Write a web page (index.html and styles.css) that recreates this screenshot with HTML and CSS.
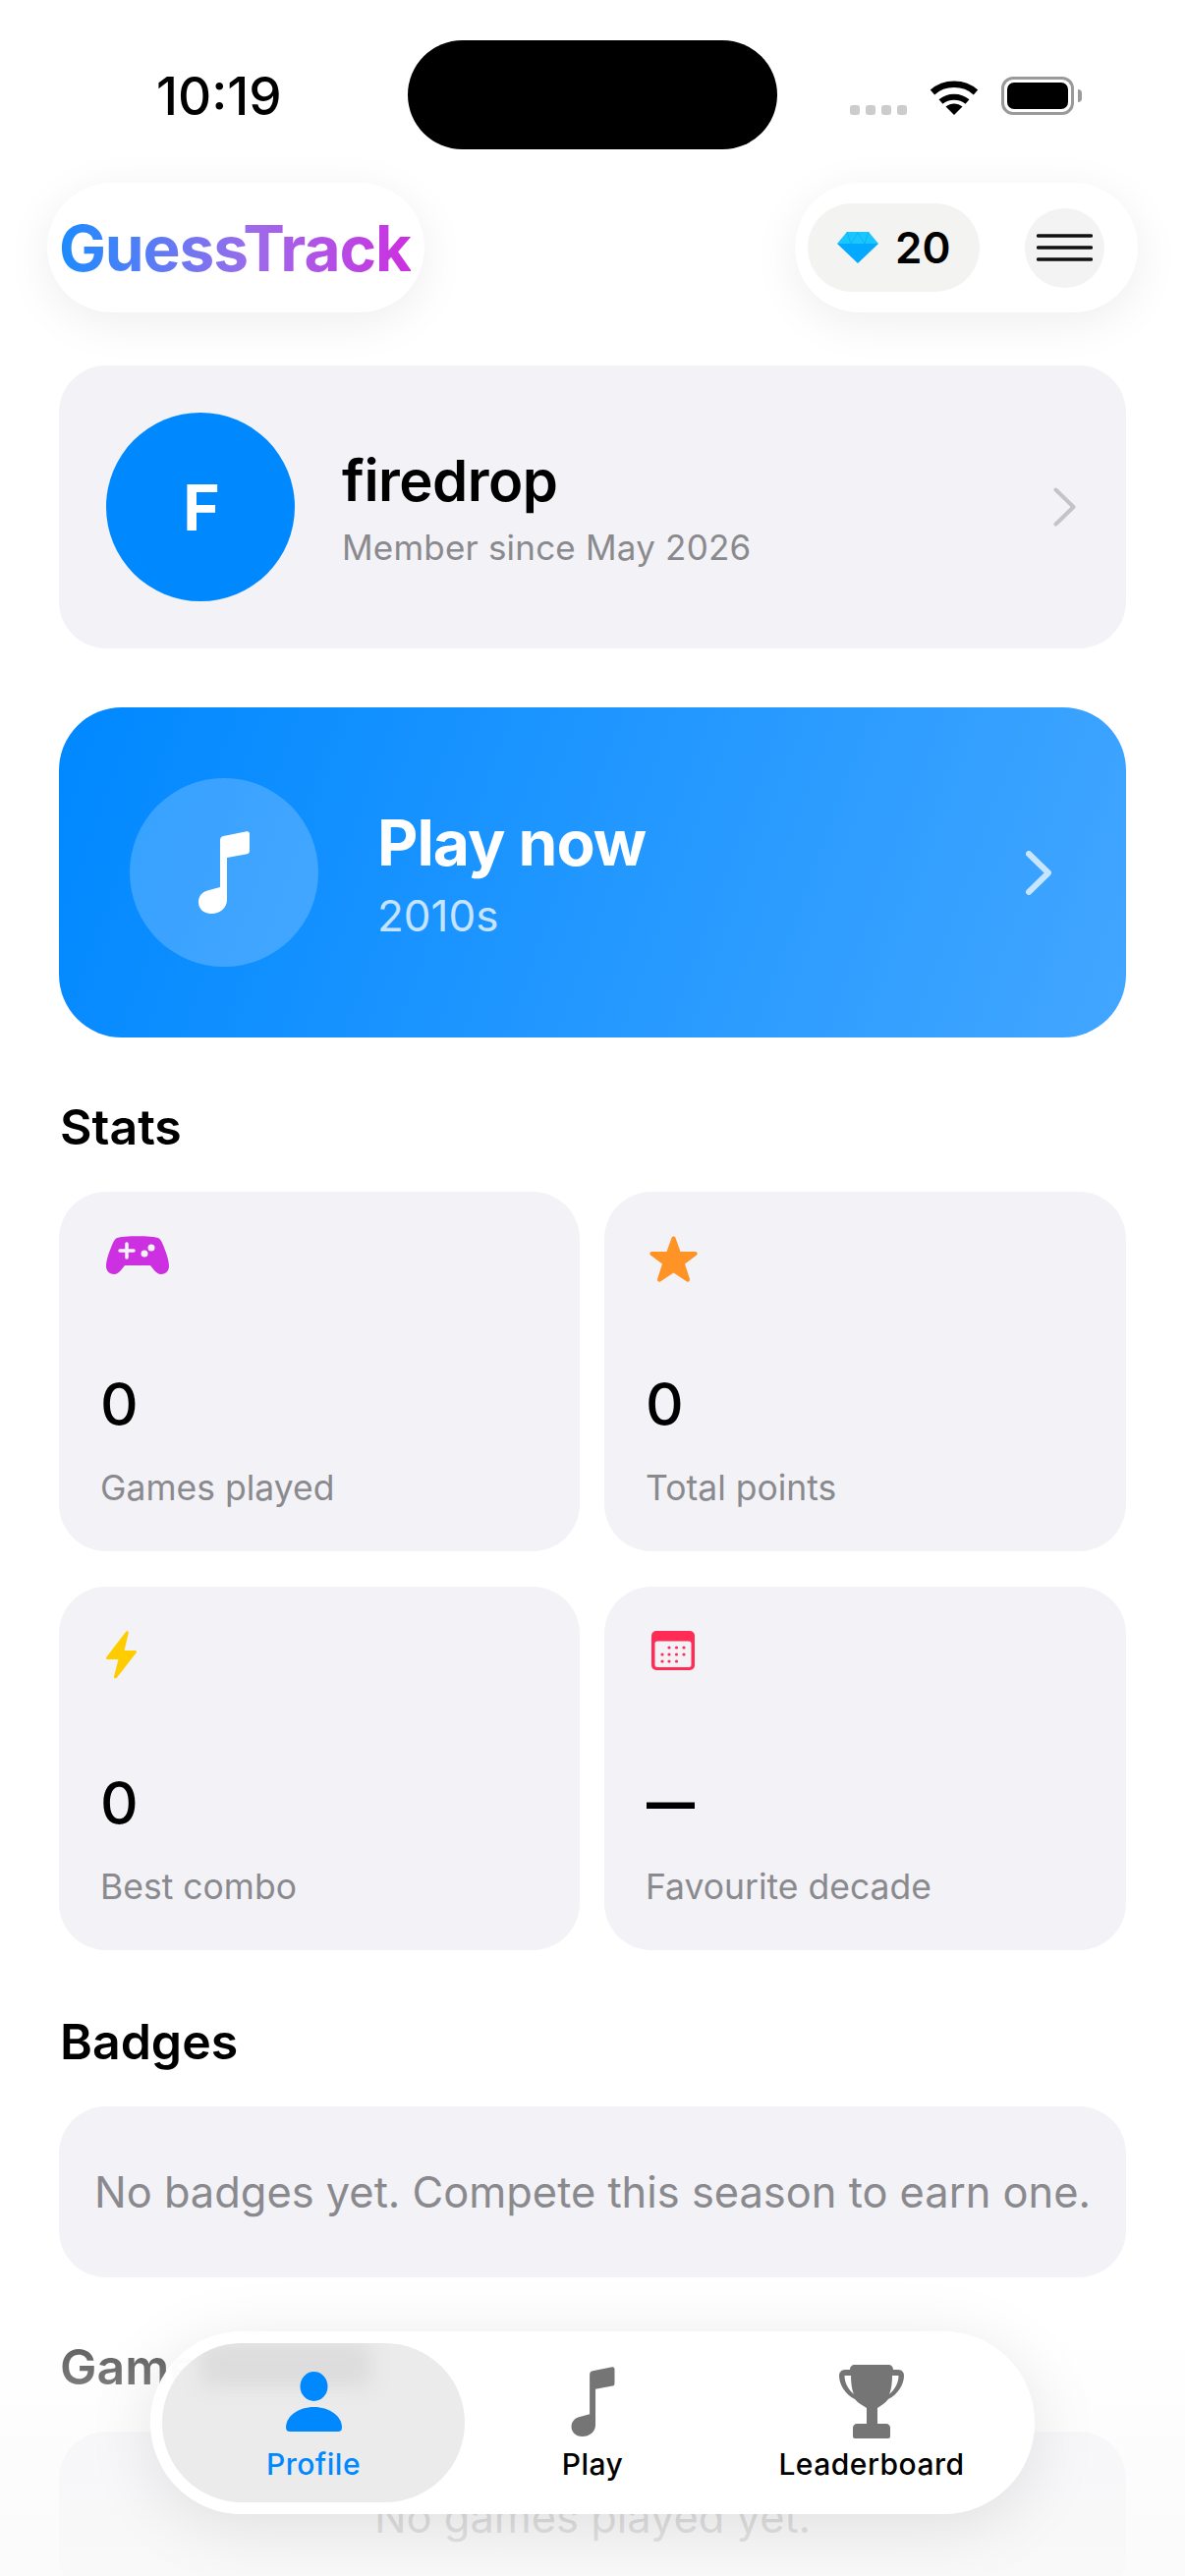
FILE: index.html
```html
<!DOCTYPE html>
<html lang="en">
<head>
<meta charset="utf-8">
<title>GuessTrack</title>
<link rel="stylesheet" href="styles.css">
</head>
<body>
<div class="screen">

	<!-- status bar -->
	<div class="status">
		<div class="time">10:19</div>
		<div class="island"></div>
		<div class="status-icons">
			<div class="signal"><i></i><i></i><i></i><i></i></div>
			<svg class="wifi" width="50" height="37" viewBox="0 0 50 37">
				<path d="M3 14C15 3 35 3 47 14" fill="none" stroke="#000" stroke-width="6.5"/>
				<path d="M11.500 23.500C19 17 31 17 38.500 23.500" fill="none" stroke="#000" stroke-width="6"/>
				<path d="M25 37L16.500 28.500C22 24.500 28 24.500 33.500 28.500Z"/>
			</svg>
			<div class="battery"><div class="battery-fill"></div></div>
		</div>
	</div>

	<!-- header -->
	<div class="header">
		<div class="pill logo-pill"><span class="logo">GuessTrack</span></div>
		<div class="pill tools">
			<div class="gems">
				<svg width="42" height="32" viewBox="0 0 42 32">
					<path d="M10 0H32L42 12H0Z" fill="#19c6ff"/>
					<path d="M0 12H42L21 32Z" fill="#02a9ff"/>
					<path d="M10 0L14 12L21 1L28 12L32 0" fill="none" stroke="#0aa6e8" stroke-width=".6"/>
				</svg>
				<span>20</span>
			</div>
			<div class="menu">
				<svg width="57" height="28" viewBox="0 0 57 28">
					<path d="M1.500 2H55.500M1.500 14H55.500M1.500 26H55.500" stroke="#111" stroke-width="3.500" stroke-linecap="round"/>
				</svg>
			</div>
		</div>
	</div>

	<div class="content">

		<div class="card profile">
			<div class="avatar">F</div>
			<div class="profile-text">
				<div class="name">firedrop</div>
				<div class="since">Member since May 2026</div>
			</div>
			<svg class="chevron" width="23" height="40" viewBox="0 0 23 40">
				<path d="M2.500 2.500L20.500 20L2.500 37.500" fill="none" stroke="#c4c4c8" stroke-width="4" stroke-linecap="round" stroke-linejoin="round"/>
			</svg>
		</div>

		<div class="play">
			<div class="play-circle">
				<svg width="52" height="84" viewBox="0 0 52 84">
					<path d="M22 57V10C22 7 23 5.500 25.500 5L49 .2C51 -.1 52 1 52 3V20C52 22 51 22.800 49.500 23.200L29 27V70C29 78 22 84 13 84C5 84 0 79 0 72C0 66 4 62 9 60.500Z" fill="#fff"/>
				</svg>
			</div>
			<div class="play-text">
				<div class="play-title">Play now</div>
				<div class="play-sub">2010s</div>
			</div>
			<svg class="chevron" width="26" height="45" viewBox="0 0 26 45">
				<path d="M3 3L23 22.500L3 42" fill="none" stroke="#fff" stroke-opacity=".72" stroke-width="6" stroke-linecap="round" stroke-linejoin="round"/>
			</svg>
		</div>

		<h2 class="title">Stats</h2>
		<div class="stats">
			<div class="card stat">
				<svg class="stat-icon" width="64" height="40" viewBox="0 0 64 40">
					<path d="M11 3C17 .5 47 .5 53 3C55 4 56 6 57 8C60 15 64 25 64 32C64 37 60 40 56 40C53 40 51 38 49 36L45 31H19L15 36C13 38 11 40 8 40C4 40 0 37 0 32C0 25 4 15 7 8C8 6 9 4 11 3Z" fill="#cc30e0"/>
					<path d="M21 9V23M14 16H28" stroke="#f2f2f7" stroke-width="3.500" stroke-linecap="round"/>
					<circle cx="46" cy="13" r="3.500" fill="#f2f2f7"/>
					<circle cx="39" cy="19" r="3.500" fill="#f2f2f7"/>
				</svg>
				<div class="stat-value">0</div>
				<div class="stat-label">Games played</div>
			</div>
			<div class="card stat">
				<svg class="stat-icon star" width="49" height="48" viewBox="0 0 49 48">
					<path d="M24.500 1.500C25.500 1.500 26 2 26.500 3L31.500 17H46.500C48.500 17 49.500 19 48 20.500L36 29.500L41 45C41.500 47 39.500 48.500 38 47.500L24.500 38.500L11 47.500C9.500 48.500 7.500 47 8 45L13 29.500L1 20.500C-.5 19 .5 17 2.500 17H17.500L22.500 3C23 2 23.500 1.500 24.500 1.500Z" fill="#ff9326"/>
				</svg>
				<div class="stat-value">0</div>
				<div class="stat-label">Total points</div>
			</div>
			<div class="card stat">
				<svg class="stat-icon low" width="31" height="49" viewBox="0 0 31 49">
					<path d="M20 1C21 -.2 23 .3 22.800 2L18.500 20H29.500C31 20 31.500 21.500 30.500 22.500L11 47.500C10 49 7.500 48.500 8 46.500L12.500 29H1.500C0 29 -.5 27.500 .5 26.500Z" fill="#ffcc00"/>
				</svg>
				<div class="stat-value">0</div>
				<div class="stat-label">Best combo</div>
			</div>
			<div class="card stat">
				<svg class="stat-icon low" width="44" height="40" viewBox="0 0 44 40">
					<rect width="44" height="40" rx="5" fill="#ff2d55"/>
					<rect x="3.500" y="10.500" width="37" height="26.500" rx="2.500" fill="#f2f2f7"/>
					<g fill="#ff2d55">
						<circle cx="18" cy="17" r="1.600"/><circle cx="25.500" cy="17" r="1.600"/><circle cx="33" cy="17" r="1.600"/>
						<circle cx="11" cy="24" r="1.600"/><circle cx="18" cy="24" r="1.600"/><circle cx="25.500" cy="24" r="1.600"/><circle cx="33" cy="24" r="1.600"/>
						<circle cx="11" cy="31" r="1.600"/><circle cx="18" cy="31" r="1.600"/><circle cx="25.500" cy="31" r="1.600"/>
					</g>
				</svg>
				<div class="stat-value dash">—</div>
				<div class="stat-label">Favourite decade</div>
			</div>
		</div>

		<h2 class="title badges-title">Badges</h2>
		<div class="card empty">No badges yet. Compete this season to earn one.</div>

		<h2 class="title">Games played</h2>
		<div class="card empty">No games played yet.</div>
	</div>

	<div class="fade"></div>

	<!-- tab bar -->
	<div class="tabs">
		<div class="tab active">
			<div class="tab-icon">
				<svg width="57" height="61" viewBox="0 0 57 61">
					<ellipse cx="28.500" cy="15" rx="14" ry="15"/>
					<path d="M0 57C0 45 13 36 28.500 36C44 36 57 45 57 57C57 60 55 61 53 61H4C2 61 0 60 0 57Z"/>
				</svg>
			</div>
			<div class="tab-label">Profile</div>
		</div>
		<div class="tab">
			<div class="tab-icon">
				<svg width="45" height="71" viewBox="0 0 52 84">
					<path d="M22 57V10C22 7 23 5.500 25.500 5L49 .2C51 -.1 52 1 52 3V20C52 22 51 22.800 49.500 23.200L29 27V70C29 78 22 84 13 84C5 84 0 79 0 72C0 66 4 62 9 60.500Z"/>
				</svg>
			</div>
			<div class="tab-label">Play</div>
		</div>
		<div class="tab">
			<div class="tab-icon">
				<svg width="66" height="75" viewBox="0 0 66 75">
					<path d="M16 0H50C53 0 55 2 55 5H60C64 5 66 8 66 11C66 20 60 30 50 35C47 39 43 41 39 44V60H48C50 60 52 62 52 64V73C52 74 51 75 50 75H16C15 75 14 74 14 73V64C14 62 16 60 18 60H28V44C24 41 19 39 16 35C6 30 0 20 0 11C0 8 2 5 6 5H11C11 2 13 0 16 0Z"/>
					<path d="M5.500 11H12C12 18 13 26 15 30C10 26 5.500 19 5.500 11ZM60.500 11H54C54 18 53 26 51 30C56 26 60.500 19 60.500 11Z" fill="#fff"/>
				</svg>
			</div>
			<div class="tab-label">Leaderboard</div>
		</div>
	</div>
</div>
</body>
</html>
```

FILE: styles.css
```css
*{ margin:0; padding:0; box-sizing:border-box;}
body{ background:#fff; color:#000; font-family:Inter,"Liberation Sans",sans-serif;}
svg{ display:block;}

.screen{ width:1206px; height:2622px; overflow:hidden; position:relative; background:#fff;}

/* status bar */
.status{ height:186px; padding:41px 0 0 159px; display:grid; grid-template-columns:256px 376px 1fr;}
.time{ font-size:53px; font-weight:500; line-height:114px; height:111px;}
.island{ height:111px; background:#000; border-radius:56px;}
.status-icons{ padding:37px 0 0 74px; display:flex; align-items:flex-end; height:76px;}
.signal{ display:flex; gap:6px; width:81px;}
.signal i{ width:10px; height:10px; background:#ccc; border-radius:3px;}
.battery{ width:74px; height:39px; margin-left:23px; border:3px solid #9a9a9a; border-radius:12px; padding:3px; position:relative;}
.battery:after{ content:""; position:absolute; right:-11px; top:10px; width:4px; height:13px; background:#9a9a9a; border-radius:0 4px 4px 0;}
.battery-fill{ height:100%; background:#000; border-radius:7px;}

/* header */
.header{ height:132px; margin:0 48px; display:flex; justify-content:space-between; position:relative; z-index:1;}
.pill{ height:132px; background:#fff; border-radius:66px; box-shadow:0 10px 48px rgba(0,0,0,.07);}
.logo-pill{ width:384px; display:flex; align-items:center; justify-content:center;}
.logo{ font-size:64px; font-weight:700; letter-spacing:-1.100px; margin-right:2px; background:linear-gradient(90deg,#1a8cff,#9d6bea 55%,#cc30e0); -webkit-background-clip:text; background-clip:text; color:transparent;}
.tools{ width:349px; padding:0 34px 0 13px; display:flex; align-items:center; justify-content:space-between;}
.gems{ width:175px; height:90px; background:#f3f4f2; border-radius:45px; padding-left:30px; display:flex; align-items:center; gap:17px; font-size:44px; font-weight:600;}
.menu{ width:81px; height:81px; background:#f3f3f3; border-radius:50%; display:flex; align-items:center; justify-content:center;}

.content{ padding:54px 60px 0;}
.card{ background:#f2f2f7; border-radius:48px;}

/* profile */
.profile{ height:288px; padding:0 51px 0 48px; display:flex; align-items:center; gap:48px;}
.avatar{ width:192px; height:192px; border-radius:50%; background:#0088ff; color:#fff; font-size:64px; font-weight:700; padding-left:2px; display:flex; align-items:center; justify-content:center;}
.profile-text{ flex:1;}
.name{ font-size:58px; font-weight:600; line-height:70px; letter-spacing:-.5px;}
.since{ font-size:35px; line-height:44px; letter-spacing:.2px; color:#8a8a8e; margin-top:11px;}

/* play */
.play{ height:336px; margin-top:60px; padding:0 76px 0 72px; border-radius:64px; background:linear-gradient(110deg,#0088ff,#42a6ff); display:flex; align-items:center; gap:60px; color:#fff;}
.play-circle{ width:192px; height:192px; border-radius:50%; background:rgba(255,255,255,.2); display:flex; align-items:center; justify-content:center;}
.play-text{ flex:1;}
.play-title{ font-size:64px; font-weight:700; line-height:76px; letter-spacing:-1px;}
.play-sub{ font-size:44px; line-height:50px; color:rgba(255,255,255,.75); margin-top:11px;}

.title{ font-size:50px; font-weight:600; line-height:60px; margin:61px 0 36px 1px;}
.badges-title{ margin-top:63px;}

/* stats */
.stats{ display:grid; grid-template-columns:530px 531px; grid-template-rows:366px 370px; column-gap:25px; row-gap:36px;}
.stat{ padding:44px 42px 42px; display:flex; flex-direction:column; align-items:flex-start;}
.stat-icon{ margin-left:6px;}
.stat-icon.star{ margin-left:4px;}
.stat-icon.low{ margin-top:1px;}
.stat-value{ font-size:60px; font-weight:500; line-height:72px; margin-top:auto;}
.stat-value.dash{ font-size:49px; font-weight:800; margin-left:1px;}
.stat-label{ font-size:35.500px; line-height:44px; color:#8a8a8e; margin-top:28px;}

.empty{ height:174px; font-size:43.400px; color:#8a8a8e; display:flex; align-items:center; justify-content:center;}

/* bottom */
.fade{ position:absolute; left:0; right:0; bottom:0; height:249px; background:linear-gradient(rgba(255,255,255,.35),rgba(252,252,252,.5) 25%,rgba(250,250,250,.75) 78%,rgba(250,250,250,.85));}
.tabs{ position:absolute; left:153px; top:2373px; width:900px; height:186px; padding:12px 24px; display:grid; grid-template-columns:repeat(3,284px); background:rgba(255,255,255,.98); border-radius:93px; box-shadow:0 12px 70px rgba(0,0,0,.1);}
.tab{ padding-top:22px; display:flex; flex-direction:column; align-items:center; position:relative; fill:#757575;}
.tab-icon{ height:75px; display:flex; align-items:center; justify-content:center; position:relative;}
.tab-label{ font-size:30px; font-weight:500; line-height:36px; letter-spacing:.5px; margin-top:8px; position:relative;}
.tab.active{ margin:0 -12px; background:#ebebec; border-radius:81px; overflow:hidden; fill:#0088ff; color:#0088ff;}
.tab.active:before{ content:""; position:absolute; left:40px; top:0; width:172px; height:44px; background:#dcdcdc; filter:blur(10px);}
```
